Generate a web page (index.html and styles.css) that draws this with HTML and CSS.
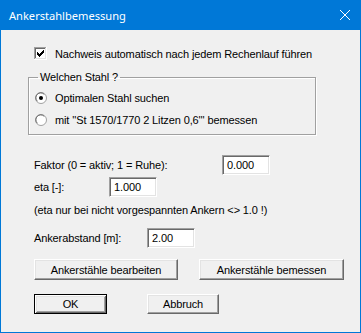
FILE: index.html
```html
<!DOCTYPE html>
<html lang="de">
<head>
    <meta charset="UTF-8">
    <meta name="viewport" content="width=device-width, initial-scale=1.0">
    <title>Ankerstahlbemessung</title>

    <link rel="stylesheet" href="styles.css">
</head>
<body>
    <div class="dialog">
        <div class="titlebar">
            <span class="title">Ankerstahlbemessung</span>
            <svg class="close" width="10" height="10" viewBox="0 0 10 10">
                <path d="M0 0L10 10M10 0L0 10" stroke="#fff" stroke-width="1"/>
            </svg>
        </div>
        <div class="content">
            <div class="check-row">
                <svg class="box" width="13" height="13" viewBox="0 0 13 13" shape-rendering="crispEdges">
                    <rect x="0" y="0" width="13" height="13" fill="#fff"/>
                    <rect x="0" y="0" width="12" height="12" fill="#a0a0a0"/>
                    <rect x="1" y="1" width="11" height="11" fill="#e3e3e3"/>
                    <rect x="1" y="1" width="10" height="10" fill="#696969"/>
                    <rect x="2" y="2" width="9" height="9" fill="#fff"/>
                    <path d="M3 5h1v3h-1zM4 6h1v3h-1zM5 7h1v3h-1zM6 6h1v3h-1zM7 5h1v3h-1zM8 4h1v3h-1zM9 3h1v3h-1z" fill="#000"/>
                </svg>
                <span>Nachweis automatisch nach jedem Rechenlauf führen</span>
            </div>

            <fieldset class="group">
                <legend>Welchen Stahl ?</legend>
                <div class="radio-row radio-first">
                    <svg class="radio" width="12" height="12" viewBox="0 0 12 12">
                        <circle cx="6" cy="6" r="5.5" fill="#fff" stroke="#a0a0a0"/>
                        <path d="M2.3 9.2A4.5 4.5 0 0 1 9.2 2.3" fill="none" stroke="#696969"/>
                        <circle cx="6" cy="6" r="2" fill="#000"/>
                    </svg>
                    <span>Optimalen Stahl suchen</span>
                </div>
                <div class="radio-row radio-second">
                    <svg class="radio" width="12" height="12" viewBox="0 0 12 12">
                        <circle cx="6" cy="6" r="5.5" fill="#fff" stroke="#a0a0a0"/>
                        <path d="M2.3 9.2A4.5 4.5 0 0 1 9.2 2.3" fill="none" stroke="#696969"/>
                    </svg>
                    <span>mit ''St 1570/1770 2 Litzen 0,6''' bemessen</span>
                </div>
            </fieldset>

            <div class="field-row row-faktor">
                <span class="lbl lbl-faktor">Faktor (0 = aktiv; 1 = Ruhe):</span>
                <span class="edit">0.000</span>
            </div>
            <div class="field-row row-eta">
                <span class="lbl lbl-eta">eta [-]:</span>
                <span class="edit">1.000</span>
            </div>
            <div class="note">(eta nur bei nicht vorgespannten Ankern &lt;&gt; 1.0 !)</div>
            <div class="field-row row-abstand">
                <span class="lbl lbl-abstand">Ankerabstand [m]:</span>
                <span class="edit">2.00</span>
            </div>

            <div class="btn-row btn-row-tools">
                <div class="btn btn-wide">Ankerstähle bearbeiten</div>
                <div class="btn btn-wide btn-wide-r">Ankerstähle bemessen</div>
            </div>
            <div class="btn-row btn-row-close">
                <div class="btn btn-ok btn-default">OK</div>
                <div class="btn btn-cancel">Abbruch</div>
            </div>
        </div>
    </div>
</body>
</html>
```

FILE: styles.css
```css
*{ padding: 0; margin: 0; box-sizing: border-box; }

body{
    background: #fff;
    font-family: "Liberation Sans", Arial, sans-serif;
    font-size: 11px;
    letter-spacing: -0.12px;
    color: #000;
}

.dialog{
    width: 361px;
    height: 333px;
}
.titlebar{
    height: 30px;
    background: #0078d7;
    color: #fff;
    display: flex;
    align-items: center;
    justify-content: space-between;
    padding: 0 11px 0 9px;
    font-family: "Noto Sans", "Open Sans", sans-serif;
    font-size: 11.1px;
    letter-spacing: 0;
}
.close{ display: block; }

.content{
    height: 303px;
    background: #f0f0f0;
    border: 1px solid #0078d7;
    border-top: 0;
    padding: 17px 0 0 33px;
}

.check-row{
    display: flex;
    align-items: center;
    gap: 8px;
    height: 13px;
}
.box, .radio{ display: block; flex: none; }

.group{
    width: 288px;
    margin: 10px 0 0 -6px;
    border: 1px solid #a0a0a0;
    box-shadow: inset 1px 1px #fff, 1px 1px #fff;
    padding: 0 0 7px 6px;
}
.group legend{
    line-height: 14px;
    padding: 0 2px;
    margin-left: 3px;
}
.radio-row{
    display: flex;
    align-items: center;
    gap: 8px;
    height: 14px;
}
.radio-first{ margin-top: 7px; }
.radio-second{ margin-top: 8px; }

.field-row{
    display: flex;
    align-items: center;
    height: 20px;
}
.row-faktor{ margin-top: 20px; }
.row-eta{ margin-top: 2px; }
.row-abstand{ margin-top: 11px; }
.lbl-faktor{ width: 188px; }
.lbl-eta{ width: 75px; }
.lbl-abstand{ width: 113px; }

.edit{
    width: 48px;
    height: 20px;
    background: #fff;
    border: 1px solid;
    border-color: #a0a0a0 #fff #fff #a0a0a0;
    box-shadow: inset 1px 1px #696969, inset -1px -1px #e3e3e3;
    padding-left: 4px;
    display: flex;
    align-items: center;
}

.note{
    height: 14px;
    line-height: 14px;
    margin-top: 6px;
}

.btn-row{
    display: flex;
}
.btn-row-tools{
    margin-top: 11px;
    gap: 21px;
}
.btn-row-close{
    margin-top: 14px;
    gap: 40px;
}
.btn{
    display: flex;
    align-items: center;
    justify-content: center;
    background: #f0f0f0;
    border: 1px solid;
    border-color: #fff #696969 #696969 #fff;
    box-shadow: inset -1px -1px #a0a0a0, inset 1px 1px #e3e3e3;
}
.btn-wide{
    width: 144px;
    height: 21px;
}
.btn-wide-r{ width: 145px; }
.btn-ok{
    width: 73px;
    height: 20px;
}
.btn-cancel{
    width: 72px;
    height: 20px;
}
.btn-default{
    border-color: #000;
    box-shadow: inset 1px 1px #fff, inset -1px -1px #696969, inset 2px 2px #e3e3e3, inset -2px -2px #a0a0a0;
}
```
